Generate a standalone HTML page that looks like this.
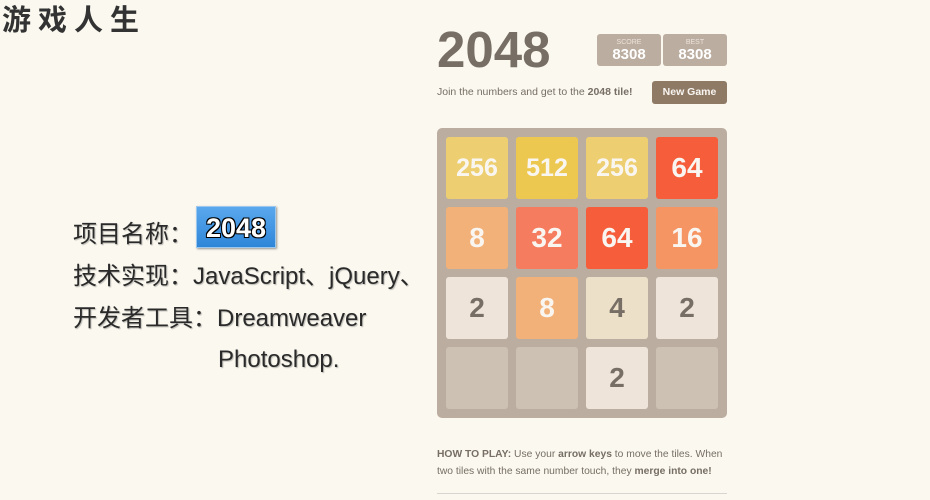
<!DOCTYPE html>
<html><head><meta charset="utf-8"><style>
*{margin:0;padding:0;box-sizing:border-box}
body{width:930px;height:500px;background:#faf8ef;position:relative;overflow:hidden;font-family:"Liberation Sans","Noto Sans CJK SC",sans-serif;color:#776e65}
.abs{position:absolute}
.title{left:2px;top:2px;font-size:29px;font-weight:bold;color:#333;letter-spacing:7px;font-family:"WenQuanYi Zen Hei","Noto Sans CJK SC",sans-serif;line-height:32px}
.info{left:73px;font-size:24px;color:#2a2a2a;font-family:"Liberation Sans","Noto Sans CJK SC",sans-serif;line-height:30px;text-shadow:1px 1px 1px rgba(0,0,0,.25)}
.badge{left:196px;top:206px;width:80px;height:42px;background:linear-gradient(#5aa8ee,#2f86d8);border:1px solid #9cc8ee;box-shadow:1px 1px 2px rgba(0,0,0,.4);color:#fff;font-weight:bold;font-size:27px;text-align:center;line-height:42px;text-shadow:1px 1px 0 #000,-1px -1px 0 #000,1px -1px 0 #000,-1px 1px 0 #000}
.h1{left:437px;top:22px;font-size:51px;font-weight:bold;color:#776e65;line-height:56px}
.sc{top:34px;width:64px;height:32px;background:#bbada0;border-radius:3px;color:#fff;text-align:center}
.sc small{display:block;font-size:7px;color:#eee4da;margin-top:5px;line-height:8px}
.sc b{display:block;font-size:15px;line-height:16px}
.sub{left:437px;top:85px;font-size:10.5px;line-height:14px}
.btn{left:652px;top:81px;width:75px;height:23px;background:#8f7a66;color:#f9f6f2;border-radius:3px;font-size:10.5px;font-weight:bold;text-align:center;line-height:23px}
.grid{left:437px;top:128px;width:290px;height:290px;background:#bbada0;border-radius:5px}
.t{position:absolute;width:62px;height:62px;border-radius:3px;font-weight:bold;text-align:center;line-height:62px;font-size:28px;color:#f9f6f2}
.how{left:437px;top:446px;font-size:10.3px;line-height:17px;width:295px}
.hr{left:437px;top:493px;width:290px;height:1px;background:#d8d4d0}
</style></head><body>
<div class="abs title">游戏人生</div>
<div class="abs info" style="top:220px">项目名称：</div>
<div class="abs badge">2048</div>
<div class="abs info" style="top:262px">技术实现：JavaScript、jQuery、</div>
<div class="abs info" style="top:304px">开发者工具：Dreamweaver</div>
<div class="abs info" style="top:345px;left:218px">Photoshop.</div>

<div class="abs h1">2048</div>
<div class="abs sc" style="left:597px"><small>SCORE</small><b>8308</b></div>
<div class="abs sc" style="left:663px"><small>BEST</small><b>8308</b></div>
<div class="abs sub">Join the numbers and get to the <b>2048 tile!</b></div>
<div class="abs btn">New Game</div>
<div class="abs grid">
<div class="t" style="left:9px;top:9px;background:#edcf72;font-size:25px">256</div>
<div class="t" style="left:79px;top:9px;background:#edc850;font-size:25px">512</div>
<div class="t" style="left:149px;top:9px;background:#edcf72;font-size:25px">256</div>
<div class="t" style="left:219px;top:9px;background:#f65e3b">64</div>
<div class="t" style="left:9px;top:79px;background:#f2b179">8</div>
<div class="t" style="left:79px;top:79px;background:#f67c5f">32</div>
<div class="t" style="left:149px;top:79px;background:#f65e3b">64</div>
<div class="t" style="left:219px;top:79px;background:#f59563">16</div>
<div class="t" style="left:9px;top:149px;background:#eee4da;color:#776e65">2</div>
<div class="t" style="left:79px;top:149px;background:#f2b179">8</div>
<div class="t" style="left:149px;top:149px;background:#ede0c8;color:#776e65">4</div>
<div class="t" style="left:219px;top:149px;background:#eee4da;color:#776e65">2</div>
<div class="t" style="left:9px;top:219px;background:#cdc1b4"></div>
<div class="t" style="left:79px;top:219px;background:#cdc1b4"></div>
<div class="t" style="left:149px;top:219px;background:#eee4da;color:#776e65">2</div>
<div class="t" style="left:219px;top:219px;background:#cdc1b4"></div>
</div>
<div class="abs how"><b>HOW TO PLAY:</b> Use your <b>arrow keys</b> to move the tiles. When two tiles with the same number touch, they <b>merge into one!</b></div>
<div class="abs hr"></div>
</body></html>
